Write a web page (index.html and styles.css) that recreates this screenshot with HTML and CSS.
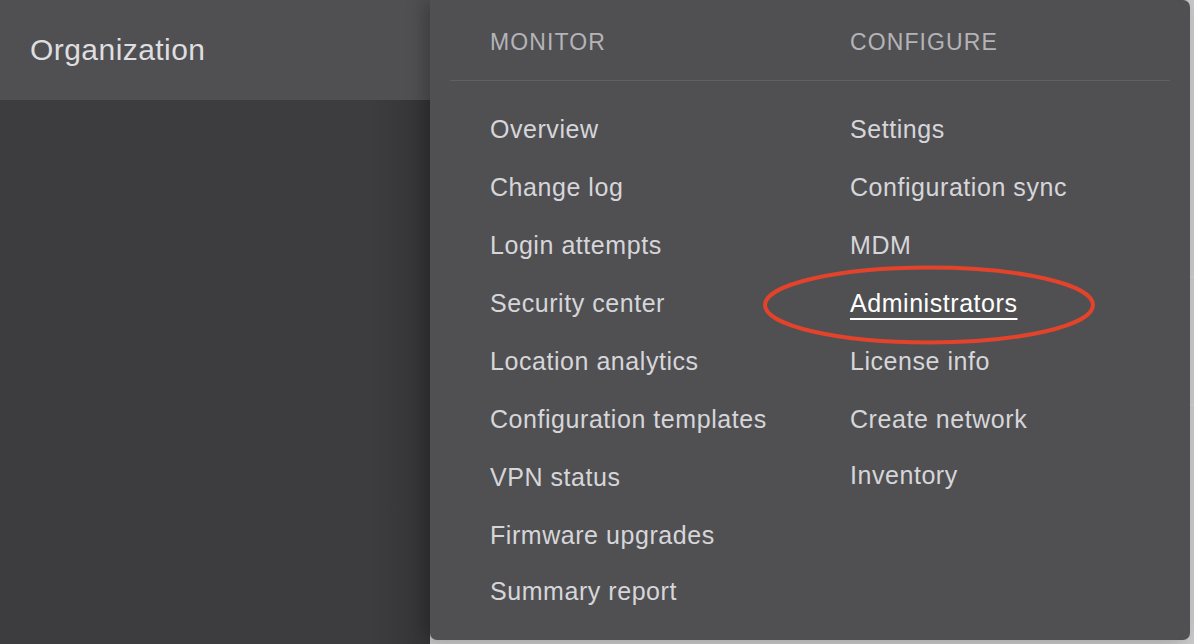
FILE: index.html
```html
<!DOCTYPE html>
<html lang="en">
<head>
<meta charset="utf-8">
<title>Organization menu</title>
<link rel="stylesheet" href="styles.css">
</head>
<body>
<div class="page">
  <aside class="sidebar">
    <div class="org-tab">Organization</div>
    <div class="sidebar-body"></div>
  </aside>
  <main class="content">
    <div class="content-line top"></div>
    <div class="content-line mid"></div>
  </main>
  <nav class="menu">
    <div class="menu-heads">
      <div class="col-head">MONITOR</div>
      <div class="col-head">CONFIGURE</div>
    </div>
    <div class="menu-divider"></div>
    <div class="menu-cols">
      <ul class="col">
        <li><a>Overview</a></li>
        <li><a>Change log</a></li>
        <li><a>Login attempts</a></li>
        <li><a>Security center</a></li>
        <li><a>Location analytics</a></li>
        <li><a>Configuration templates</a></li>
        <li><a>VPN status</a></li>
        <li><a>Firmware upgrades</a></li>
        <li class="last"><a>Summary report</a></li>
      </ul>
      <ul class="col">
        <li><a>Settings</a></li>
        <li><a>Configuration sync</a></li>
        <li><a>MDM</a></li>
        <li><a class="active">Administrators</a></li>
        <li><a>License info</a></li>
        <li><a>Create network</a></li>
        <li class="last"><a>Inventory</a></li>
      </ul>
    </div>
    <svg class="circle-mark" width="340" height="86" viewBox="0 0 340 86">
      <ellipse cx="170" cy="43" rx="164" ry="37.5" fill="none" stroke="#e3432a" stroke-width="4"/>
    </svg>
  </nav>
</div>
</body>
</html>
```
FILE: styles.css
```css
* { box-sizing: border-box; }
html, body {
  margin: 0;
  padding: 0;
  height: 100%;
}
body {
  font-family: "Liberation Sans", Arial, sans-serif;
  background: #e4e4e4;
  overflow: hidden;
}
.page {
  position: relative;
  display: flex;
  width: 1194px;
  height: 644px;
}
.sidebar {
  width: 430px;
  flex: 0 0 430px;
  display: flex;
  flex-direction: column;
}
.org-tab {
  height: 100px;
  background: #505052;
  color: #dedee0;
  font-size: 30px;
  letter-spacing: 0.45px;
  padding-left: 30px;
  display: flex;
  align-items: center;
}
.sidebar-body {
  flex: 1;
  background: linear-gradient(to right, #3d3d3f 0, #3d3d3f 370px, #343436 430px);
}
.content {
  flex: 1;
  background: #c9c9c9;
  position: relative;
}
.content-line {
  height: 2px;
  background: #cfcfcf;
  margin-left: 760px;
}
.content-line.top { margin-top: 276px; }
.content-line.mid { margin-top: 126px; }

.menu {
  position: absolute;
  left: 430px;
  top: 0;
  width: 760px;
  height: 640px;
  background: #505052;
  border-radius: 0 7px 7px 7px;
  box-shadow: -6px 0 18px rgba(0, 0, 0, 0.25);
}
.menu-heads {
  height: 80px;
  display: flex;
  align-items: center;
  padding: 4px 0 0 60px;
}
.col-head {
  flex: 0 0 360px;
  color: #b4b4b8;
  font-size: 23px;
  letter-spacing: 1.1px;
}
.menu-divider {
  height: 1px;
  margin: 0 20px;
  background: #606063;
}
.menu-cols {
  display: flex;
  padding: 19px 0 0 60px;
}
.col {
  list-style: none;
  margin: 0;
  padding: 0;
  flex: 0 0 360px;
}
.col li {
  height: 58px;
  line-height: 58px;
  font-size: 25px;
  letter-spacing: 0.55px;
  white-space: nowrap;
}
.col li.last {
  height: 54px;
  line-height: 54px;
}
.col a {
  color: #d6d6da;
}
.col a.active {
  color: #ffffff;
  text-decoration: underline;
  text-decoration-thickness: 2px;
  text-underline-offset: 6px;
}
.circle-mark {
  position: absolute;
  left: 329px;
  top: 262px;
}
```
